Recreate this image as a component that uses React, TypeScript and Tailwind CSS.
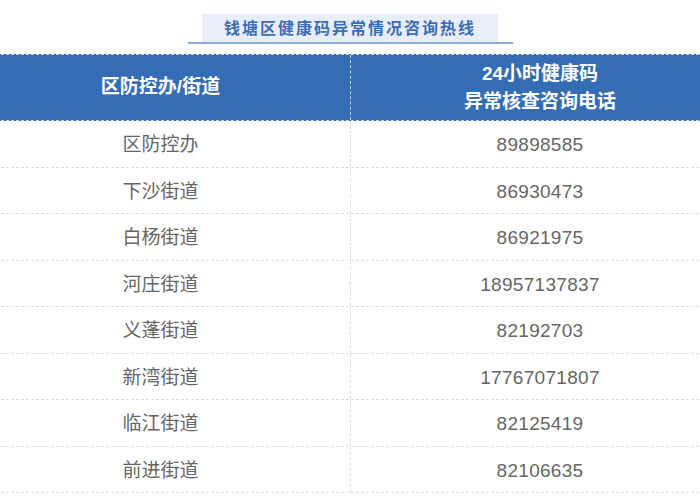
const rows: [string, string][] = [
  ["区防控办", "89898585"],
  ["下沙街道", "86930473"],
  ["白杨街道", "86921975"],
  ["河庄街道", "18957137837"],
  ["义蓬街道", "82192703"],
  ["新湾街道", "17767071807"],
  ["临江街道", "82125419"],
  ["前进街道", "82106635"],
];

export default function App() {
  return (
    <div className="w-[700px] h-[500px] bg-white overflow-hidden font-['Liberation_Sans','Noto_Sans_CJK_SC',sans-serif]">
      {/* Title */}
      <div className="flex flex-col items-center pt-[14px]">
        <div className="w-[296px] h-[29px] bg-[#e7eef8] flex items-center justify-center">
          <span className="text-[16px] font-bold tracking-[2px] text-[#3b6db3] leading-none">
            钱塘区健康码异常情况咨询热线
          </span>
        </div>
        <div className="w-[325px] h-[2px] bg-[#8aabd9] -mt-[1px]" />
      </div>

      {/* Table, wider than the view on both sides */}
      <div className="mt-[10px] w-[758px] -ml-[29px]">
        <div className="grid grid-cols-[380px_1fr] h-[67px] bg-[#346db6] border-y border-dashed border-white/70 text-white font-bold text-[19px]">
          <div className="flex items-center justify-center border-r border-dashed border-white/70">
            区防控办/街道
          </div>
          <div className="flex flex-col items-center justify-center leading-[28px]">
            <span>24小时健康码</span>
            <span>异常核查咨询电话</span>
          </div>
        </div>
        {rows.map(([name, phone]) => (
          <div
            key={name}
            className="grid grid-cols-[380px_1fr] h-[46.5px] border-b border-dashed border-[#dcdcdc] text-[#666666] text-[19px]"
          >
            <div className="flex items-center justify-center pt-[3px] border-r border-dashed border-[#dcdcdc]">
              {name}
            </div>
            <div className="flex items-center justify-center pt-[3px] tracking-[0.3px]">{phone}</div>
          </div>
        ))}
      </div>
    </div>
  );
}
